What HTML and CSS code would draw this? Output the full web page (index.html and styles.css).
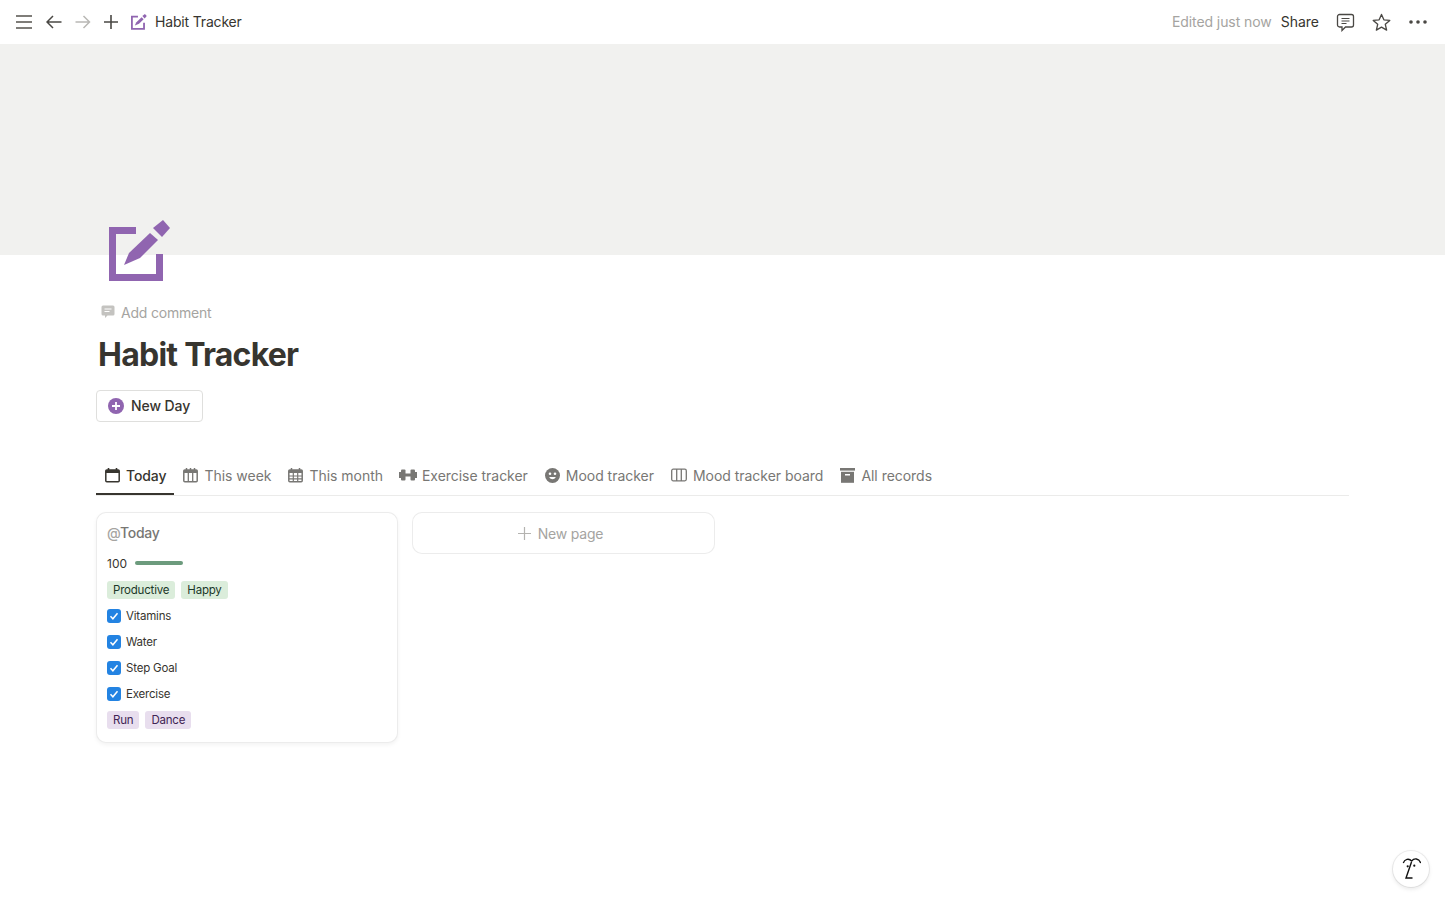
FILE: index.html
```html
<!DOCTYPE html>
<html lang="en">
<head>
<meta charset="utf-8">
<title>Habit Tracker</title>
<link rel="stylesheet" href="styles.css">
</head>
<body>
<header class="topbar">
  <div class="top-left">
    <svg class="ic-menu" width="16" height="14" viewBox="0 0 16 14"><path d="M0 1h16M0 7h16M0 13h16" stroke="#55534e" stroke-width="1.6" fill="none"/></svg>
    <svg class="ic-back" width="16" height="14" viewBox="0 0 16 14"><path d="M15.500 7H1M7 1L1 7l6 6" stroke="#4a4844" stroke-width="1.5" fill="none"/></svg>
    <svg class="ic-fwd" width="16" height="14" viewBox="0 0 16 14"><path d="M.5 7h14M8.500 1l6 6-6 6" stroke="#b9b8b5" stroke-width="1.500" fill="none"/></svg>
    <svg class="ic-plus" width="14" height="14" viewBox="0 0 14 14"><path d="M7 0v14M0 7h14" stroke="#4a4844" stroke-width="1.600" fill="none"/></svg>
    <svg class="ic-page" width="16" height="16" viewBox="0 0 62 62"><path d="M27 10.500H3.500V57.500H50.500V34" stroke="#9065b0" stroke-width="7" fill="none"/><path d="M41 13 49 20 31 38 15 45 20 33Z" fill="#9065b0"/><path d="M44 8 54 0 61 8 53 17Z" fill="#9065b0"/></svg>
    <span class="crumb">Habit Tracker</span>
  </div>
  <div class="top-right">
    <span class="edited">Edited just now</span>
    <span class="share">Share</span>
    <svg class="ic-comment" width="19" height="19" viewBox="0 0 19 19"><path d="M3.500 1.500h12a2 2 0 0 1 2 2v8.500a2 2 0 0 1-2 2H9.500l-3.500 3.500v-3.500H3.500a2 2 0 0 1-2-2V3.500a2 2 0 0 1 2-2Z" stroke="#4a4844" stroke-width="1.300" fill="none"/><path d="M5.500 5.500h8M5.500 8h8M5.500 10.500h5" stroke="#4a4844" stroke-width="1.200" fill="none"/></svg>
    <svg class="ic-star" width="19" height="19" viewBox="0 0 20 20"><path d="M10 1.500l2.500 5.700 6.200.6-4.700 4.100 1.400 6.100L10 14.800l-5.400 3.200L6 11.900 1.300 7.800l6.200-.6Z" stroke="#4a4844" stroke-width="1.400" fill="none" stroke-linejoin="round"/></svg>
    <svg class="ic-more" width="18" height="4" viewBox="0 0 18 4"><circle cx="2" cy="2" r="1.800" fill="#4a4844"/><circle cx="9" cy="2" r="1.800" fill="#4a4844"/><circle cx="16" cy="2" r="1.800" fill="#4a4844"/></svg>
  </div>
</header>

<div class="cover"></div>

<main class="page">
  <svg class="page-icon" width="62" height="62" viewBox="0 0 62 62"><path d="M27 10.500H3.500V57.500H50.500V34" stroke="#9065b0" stroke-width="7" fill="none"/><path d="M41 13 49 20 31 38 15 45 20 33Z" fill="#9065b0"/><path d="M44 8 54 0 61 8 53 17Z" fill="#9065b0"/></svg>

  <div class="add-comment">
    <svg width="14" height="14" viewBox="0 0 14 14"><path d="M2 .5h10a1.500 1.500 0 0 1 1.500 1.500v7a1.500 1.500 0 0 1-1.500 1.500H6.500L4 13v-2.500H2A1.500 1.500 0 0 1 .5 9V2A1.500 1.500 0 0 1 2 .5Z" fill="#c4c3c0"/><path d="M3.500 4h7M3.500 6.500h5" stroke="#fff" stroke-width="1"/></svg>
    <span>Add comment</span>
  </div>

  <h1 class="title">Habit Tracker</h1>

  <button class="new-day">
    <svg width="16" height="16" viewBox="0 0 16 16"><circle cx="8" cy="8" r="8" fill="#9065b0"/><path d="M8 4v8M4 8h8" stroke="#fff" stroke-width="1.800"/></svg>
    <span class="new-day-label">New Day</span>
  </button>

  <nav class="tabs">
    <div class="tab active">
      <svg width="15" height="15" viewBox="0 0 15 15"><path d="M3.500 0v3M11.500 0v3" stroke="#37352f" stroke-width="1.600"/><rect x=".8" y="2" width="13.400" height="11.700" rx="1" stroke="#37352f" stroke-width="1.500" fill="none"/><rect x=".8" y="2" width="13.400" height="3" fill="#37352f"/></svg>
      <span>Today</span>
    </div>
    <div class="tab">
      <svg width="15" height="15" viewBox="0 0 15 15"><path d="M3.500 0v3M7.500 0v3M11.500 0v3" stroke="#787774" stroke-width="1.500"/><rect x=".8" y="2" width="13.400" height="11.700" rx="1" stroke="#787774" stroke-width="1.500" fill="none"/><rect x=".8" y="2" width="13.400" height="3" fill="#787774"/><path d="M5.300 5v8M9.700 5v8" stroke="#787774" stroke-width="1.300"/></svg>
      <span>This week</span>
    </div>
    <div class="tab">
      <svg width="15" height="15" viewBox="0 0 15 15"><path d="M3.500 0v3M11.500 0v3" stroke="#787774" stroke-width="1.500"/><rect x=".8" y="2" width="13.400" height="11.700" rx="1" stroke="#787774" stroke-width="1.500" fill="none"/><rect x=".8" y="2" width="13.400" height="3" fill="#787774"/><path d="M5.300 5v8M9.700 5v8M1 8h13M1 10.800h13" stroke="#787774" stroke-width="1.200"/></svg>
      <span>This month</span>
    </div>
    <div class="tab tab-gym">
      <svg width="18" height="14" viewBox="0 0 18 14"><rect x="0" y="4" width="2" height="6" fill="#787774"/><rect x="2" y="1.500" width="4.500" height="11" rx="1" fill="#787774"/><rect x="6" y="5.500" width="6" height="3" fill="#787774"/><rect x="11.500" y="1.500" width="4.500" height="11" rx="1" fill="#787774"/><rect x="16" y="4" width="2" height="6" fill="#787774"/></svg>
      <span>Exercise tracker</span>
    </div>
    <div class="tab">
      <svg width="15" height="15" viewBox="0 0 15 15"><circle cx="7.500" cy="7.500" r="7.500" fill="#787774"/><circle cx="5" cy="5.700" r="1.300" fill="#fff"/><circle cx="10" cy="5.700" r="1.300" fill="#fff"/><path d="M4.200 9c.8 1.500 2 2.200 3.300 2.200S10 10.500 10.800 9Z" fill="#fff"/></svg>
      <span>Mood tracker</span>
    </div>
    <div class="tab">
      <svg width="16" height="14" viewBox="0 0 16 14"><rect x=".7" y="1.200" width="14.600" height="11.600" rx="1.500" stroke="#787774" stroke-width="1.300" fill="none"/><path d="M5.700 1v12M10.300 1v12" stroke="#787774" stroke-width="1.300"/></svg>
      <span>Mood tracker board</span>
    </div>
    <div class="tab">
      <svg width="15" height="15" viewBox="0 0 15 15"><rect x="0" y="0" width="15" height="2.600" fill="#787774"/><rect x="1" y="3.800" width="13" height="11" fill="#787774"/><rect x="5" y="6" width="5" height="1.500" fill="#fff"/></svg>
      <span>All records</span>
    </div>
  </nav>

  <section class="board">
    <article class="card">
      <div class="card-title"><span class="at">@</span>Today</div>
      <div class="row score"><span>100</span><span class="bar"></span></div>
      <div class="row tags">
        <span class="tag green">Productive</span>
        <span class="tag green">Happy</span>
      </div>
      <div class="row check"><svg class="box" width="14" height="14" viewBox="0 0 14 14"><rect width="14" height="14" rx="3" fill="#2383e2"/><path d="M3.500 7.300l2.400 2.500 4.600-5.500" stroke="#fff" stroke-width="1.500" fill="none"/></svg><span>Vitamins</span></div>
      <div class="row check"><svg class="box" width="14" height="14" viewBox="0 0 14 14"><rect width="14" height="14" rx="3" fill="#2383e2"/><path d="M3.500 7.300l2.400 2.500 4.600-5.500" stroke="#fff" stroke-width="1.500" fill="none"/></svg><span>Water</span></div>
      <div class="row check"><svg class="box" width="14" height="14" viewBox="0 0 14 14"><rect width="14" height="14" rx="3" fill="#2383e2"/><path d="M3.500 7.300l2.400 2.500 4.600-5.500" stroke="#fff" stroke-width="1.500" fill="none"/></svg><span>Step Goal</span></div>
      <div class="row check"><svg class="box" width="14" height="14" viewBox="0 0 14 14"><rect width="14" height="14" rx="3" fill="#2383e2"/><path d="M3.500 7.300l2.400 2.500 4.600-5.500" stroke="#fff" stroke-width="1.500" fill="none"/></svg><span>Exercise</span></div>
      <div class="row tags">
        <span class="tag purple">Run</span>
        <span class="tag purple">Dance</span>
      </div>
    </article>
    <div class="new-page">
      <svg width="13" height="13" viewBox="0 0 13 13"><path d="M6.500 0v13M0 6.500h13" stroke="#b4b3b0" stroke-width="1.200"/></svg>
      <span>New page</span>
    </div>
  </section>
</main>

<div class="help">
  <svg width="20" height="22" viewBox="0 0 20 22"><path d="M2.300 5C3.500 1 8 0 10.700 3 13 0 18 0 19.700 5" stroke="#111" stroke-width="1.300" fill="none"/><path d="M10.500 4 5 20H11.500" stroke="#111" stroke-width="1.400" fill="none"/><circle cx="6.700" cy="8.300" r="1.100" fill="#111"/><circle cx="13.300" cy="7.700" r="1.100" fill="#111"/></svg>
</div>
</body>
</html>
```
FILE: styles.css
```css
* { box-sizing: border-box; }
html, body { margin: 0; padding: 0; height: 100%; }
body {
  font-family: Inter, "Liberation Sans", sans-serif;
  color: #37352f;
  background: #fff;
  overflow: hidden;
  position: relative;
}
.topbar {
  height: 44px;
  display: flex;
  align-items: center;
  justify-content: space-between;
  padding: 0 18px 0 16px;
}
.top-left, .top-right { display: flex; align-items: center; }
.ic-back { margin-left: 14px; }
.ic-fwd { margin-left: 13px; }
.ic-plus { margin-left: 13px; }
.ic-page { margin-left: 13px; }
.crumb { font-size: 14px; margin: 0 0 2px 8px; letter-spacing: -0.17px; }
.edited { font-size: 14px; color: #a5a4a1; letter-spacing: -0.08px; margin-bottom: 2px; }
.share { font-size: 14px; margin: 0 0 2px 9px; }
.ic-comment { margin-left: 17px; }
.ic-star { margin-left: 17px; }
.ic-more { margin-left: 18px; }
.cover { height: 211px; background: #f1f1ef; }
.page { padding: 0 96px; }
.page-icon { display: block; margin: -35px 0 0 13px; position: relative; }
.add-comment {
  display: flex; align-items: center; gap: 6px;
  margin: 21px 0 0 5px; height: 18px;
  font-size: 14px; color: #a5a4a1; letter-spacing: -0.2px;
}
.title {
  margin: 14px 0 0 2px;
  font-size: 32px; line-height: 40px; font-weight: 700;
  letter-spacing: -0.75px;
}
.new-day {
  display: flex; align-items: center; gap: 7px;
  margin-top: 15px;
  width: 107px; height: 32px; padding: 0 0 0 11px;
  background: #fff; border: 1px solid #dfdfdd; border-radius: 4px;
  font: 500 14px Inter, "Liberation Sans", sans-serif; color: #37352f;
  letter-spacing: -0.1px;
}
.new-day-label { margin-bottom: 2px; }
.tabs {
  display: flex;
  margin-top: 32px;
  height: 42px;
  border-bottom: 1px solid #ebebea;
}
.tab {
  display: flex; align-items: center; gap: 6px;
  height: 41px; padding: 1px 8px 0 9px;
  font-size: 14px; font-weight: 400; color: #787774;
  letter-spacing: -0.03px;
}
.tab-gym { padding-left: 8px; gap: 5px; }
.tab.active { color: #37352f; font-weight: 500; letter-spacing: -0.1px; box-shadow: inset 0 -2px 0 #37352f; }
.board { display: flex; align-items: flex-start; gap: 14px; margin-top: 16px; }
.card, .new-page {
  background: #fff;
  border-radius: 10px;
  border: 1px solid rgba(15,15,15,.08);
}
.card {
  padding: 10px 10px 9px; height: 231px; width: 302px;
  box-shadow: 0 2px 4px rgba(15,15,15,.05);
}
.card-title { font-size: 14px; font-weight: 500; line-height: 20px; color: #787774; margin-bottom: 7px; letter-spacing: -0.3px; }
.at { color: #a5a4a1; }
.row { display: flex; align-items: center; height: 26px; font-size: 11.5px; letter-spacing: -0.2px; }
.score { gap: 8px; font-size: 12px; letter-spacing: 0; margin-bottom: 1px; }
.bar { width: 48px; height: 4px; border-radius: 2px; background: #6c9b7d; }
.tags { gap: 6px; }
.tag { height: 18px; line-height: 18px; padding: 0 6px; border-radius: 3px; }
.green { background: #dbeddb; color: #1c3829; }
.purple { background: #e8deee; color: #412454; }
.check { gap: 5px; }
.box { flex: none; }
.new-page {
  height: 42px; width: 303px; padding-right: 6px;
  display: flex; align-items: center; justify-content: center; gap: 7px;
  font-size: 14px; color: #a5a4a1; letter-spacing: -0.2px;
}
.help {
  position: absolute; right: 16px; bottom: 16px;
  width: 36px; height: 36px; border-radius: 50%;
  background: #fff;
  box-shadow: 0 0 0 1px rgba(15,15,15,.07), 0 2px 4px rgba(15,15,15,.1);
  display: flex; align-items: center; justify-content: center;
}
```
